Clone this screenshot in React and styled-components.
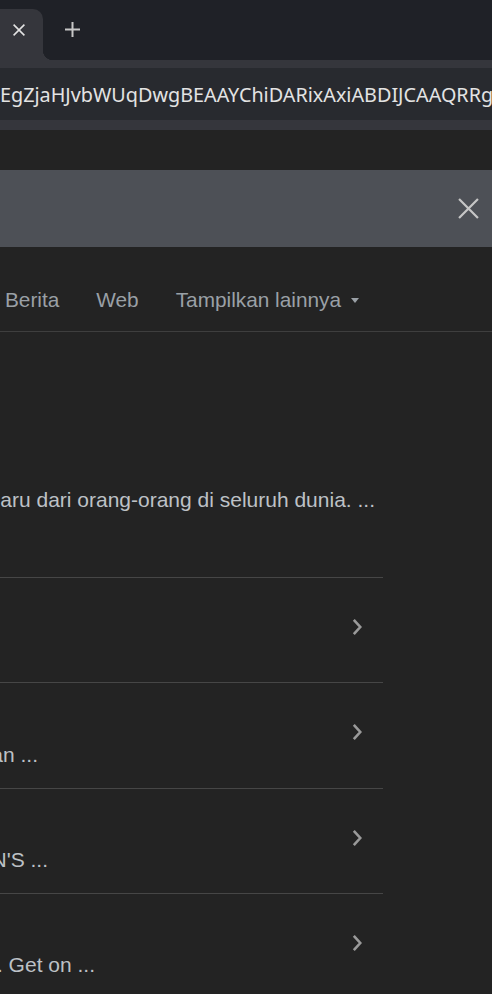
import React from "react"
import styled, { createGlobalStyle } from "styled-components"

const GlobalStyle = createGlobalStyle`
  html, body {
    margin: 0;
    padding: 0;
    background: #232323;
    overflow: hidden;
  }
  body {
    font-family: "Liberation Sans", Arial, sans-serif;
  }
`

const Window = styled.div`
  width: 492px;
  height: 994px;
  overflow: hidden;
  background: #232323;
`

const TabStrip = styled.div`
  height: 60px;
  display: flex;
  align-items: flex-start;
  background: #1f2127;
`

const Tab = styled.div`
  position: relative;
  box-sizing: border-box;
  width: 43px;
  height: 51px;
  margin-top: 9px;
  padding: 15px 18px 0 0;
  display: flex;
  justify-content: flex-end;
  align-items: flex-start;
  background: #35363c;
  border-top-right-radius: 10px;

  &::after {
    content: "";
    position: absolute;
    right: -10px;
    bottom: 0;
    width: 10px;
    height: 10px;
    background: radial-gradient(circle at 100% 0, transparent 10px, #35363c 10.5px);
  }
`

const NewTab = styled.div`
  margin: 22px 0 0 22px;
  display: flex;
`

const Toolbar = styled.div`
  box-sizing: border-box;
  height: 70px;
  padding-top: 8px;
  background: #35363c;
`

const Omnibox = styled.div`
  height: 52px;
  display: flex;
  align-items: center;
  overflow: hidden;
  white-space: nowrap;
  background: #282a2f;
  color: #e3e3e3;
  font-family: "Noto Sans", "Open Sans", sans-serif;
  font-size: 19.8px;
`

const SearchBar = styled.div`
  box-sizing: border-box;
  height: 77px;
  margin-top: 40px;
  padding-right: 13px;
  display: flex;
  align-items: center;
  justify-content: flex-end;
  background: #4d5056;
`

const NavBar = styled.div`
  box-sizing: border-box;
  height: 85px;
  padding-top: 39px;
  border-bottom: 1px solid #3e3e3e;
`

const NavTabs = styled.div`
  width: 359px;
  display: flex;
  justify-content: flex-end;
  gap: 37px;
  white-space: nowrap;
`

const NavItem = styled.div`
  display: flex;
  align-items: center;
  gap: 10px;
  font-size: 20.8px;
  line-height: 28px;
  color: #9aa0a6;
`

const Caret = styled.span`
  width: 0;
  height: 0;
  margin-top: 1px;
  border-left: 4.5px solid transparent;
  border-right: 4.5px solid transparent;
  border-top: 5px solid #9aa0a6;
`

const Result = styled.div`
  padding: 153px 0 62px;
`

const Snippet = styled.div`
  width: ${props => props.$end}px;
  display: flex;
  justify-content: flex-end;
  white-space: nowrap;
  font-size: 21px;
  line-height: 30px;
  color: #bdc1c6;
`

const Row = styled.div`
  box-sizing: border-box;
  width: 383px;
  height: ${props => props.$h}px;
  display: flex;
  border-top: 1px solid #464646;
`

const RowText = styled.div`
  flex: 1;
  min-width: 0;
  padding-bottom: 18px;
  display: flex;
  flex-direction: column;
  justify-content: flex-end;
`

const RowChevron = styled.div`
  padding-top: 40px;
  margin-right: 21px;
`

const CloseIcon = ({ size, stroke, color }) => (
  <svg width={size} height={size} viewBox="0 0 20 20">
    <path d="M1 1 L19 19 M19 1 L1 19" stroke={color} strokeWidth={stroke} fill="none" />
  </svg>
)

const PlusIcon = () => (
  <svg width="15" height="15" viewBox="0 0 15 15">
    <path d="M7.5 0 V15 M0 7.5 H15" stroke="#c7c7c7" strokeWidth="2" fill="none" />
  </svg>
)

const Chevron = () => (
  <svg width="10" height="18" viewBox="0 0 10 18">
    <path d="M1.8 1.8 L8.3 9 L1.8 16.2" stroke="#9a9a9a" strokeWidth="2.6" fill="none" />
  </svg>
)

const rows = [
  { end: 0, h: 105, text: "" },
  { end: 38, h: 106, text: "Ikuti langkah berikut untuk mulai berbagi foto dengan teman-teman ..." },
  { end: 48, h: 105, text: "Koleksi terbaru untuk pria dan wanita dari WOMEN'S ..." },
  { end: 95, h: 105, text: "See what's new from friends all over the world. Get on ..." },
]

const App = () => {
  return (
    <Window>
      <GlobalStyle />
      <TabStrip>
        <Tab>
          <CloseIcon size={12} stroke={2.6} color="#e3e3e3" />
        </Tab>
        <NewTab>
          <PlusIcon />
        </NewTab>
      </TabStrip>
      <Toolbar>
        <Omnibox>EgZjaHJvbWUqDwgBEAAYChiDARixAxiABDIJCAAQRRg8MgYIAhBFGDw</Omnibox>
      </Toolbar>
      <SearchBar>
        <CloseIcon size={21} stroke={2.1} color="#c6c6c6" />
      </SearchBar>
      <NavBar>
        <NavTabs>
          <NavItem>Semua</NavItem>
          <NavItem>Gambar</NavItem>
          <NavItem>Video</NavItem>
          <NavItem>Berita</NavItem>
          <NavItem>Web</NavItem>
          <NavItem>
            Tampilkan lainnya
            <Caret />
          </NavItem>
        </NavTabs>
      </NavBar>
      <Result>
        <Snippet $end={375}>
          <span>Lihat hal-hal baru dari orang-orang di seluruh dunia. ...</span>
        </Snippet>
      </Result>
      {rows.map((row, i) => (
        <Row key={i} $h={row.h}>
          <RowText>
            {row.text && (
              <Snippet $end={row.end}>
                <span>{row.text}</span>
              </Snippet>
            )}
          </RowText>
          <RowChevron>
            <Chevron />
          </RowChevron>
        </Row>
      ))}
    </Window>
  )
}

export default App
